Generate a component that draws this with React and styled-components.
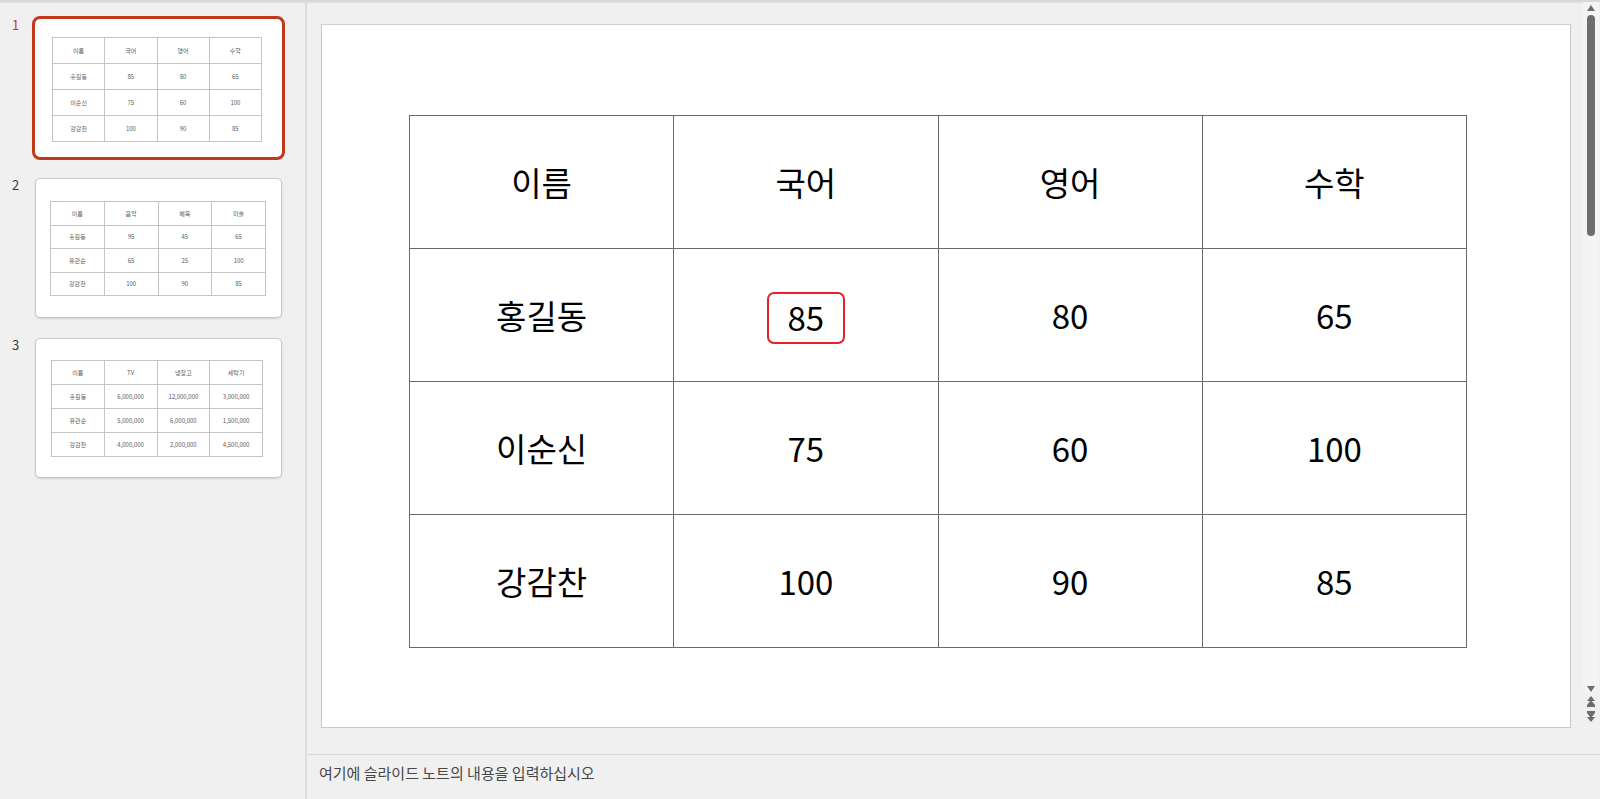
import React from "react";
import styled, { createGlobalStyle } from "styled-components";

const GlobalStyle = createGlobalStyle`
  html, body {
    margin: 0;
    padding: 0;
    background: #f0f0f0;
    overflow: hidden;
  }
  body {
    font-family: "Noto Sans CJK KR", "Noto Sans", sans-serif;
  }
`;

const Window = styled.div`
  width: 1600px;
  height: 799px;
  display: flex;
  flex-direction: column;
  background: #f0f0f0;
  overflow: hidden;
`;

const TopEdge = styled.div`
  height: 2px;
  background: #d8d8d8;
  box-shadow: 0 1px 2px rgba(0, 0, 0, 0.08);
  flex-shrink: 0;
`;

const Body = styled.div`
  flex: 1;
  display: flex;
  min-height: 0;
`;

const SlidePanel = styled.div`
  width: 307px;
  flex-shrink: 0;
  border-right: 2px solid #dcdcdc;
  padding-top: 14px;
  display: flex;
  flex-direction: column;
  gap: 16px;
  box-sizing: border-box;
`;

const SlideRow = styled.div`
  display: flex;
  align-items: flex-start;
`;

const SlideNumber = styled.div`
  width: 32px;
  padding-left: 12px;
  padding-top: 1px;
  box-sizing: border-box;
  font-size: 13px;
  line-height: 16px;
  color: ${(p) => (p.$active ? "#c43e1c" : "#3a3a3a")};
`;

const ThumbSlot = styled.div`
  width: 253px;
  height: 144px;
  display: flex;
`;

const Thumb = styled.div`
  box-sizing: border-box;
  background: #fff;
  margin: ${(p) => (p.$active ? "0" : "2px 3px")};
  width: ${(p) => (p.$active ? "253px" : "247px")};
  height: ${(p) => (p.$active ? "144px" : "140px")};
  border: ${(p) => (p.$active ? "3px solid #c0391b" : "1px solid #c9c9c9")};
  border-radius: ${(p) => (p.$active ? "8px" : "5px")};
  box-shadow: ${(p) => (p.$active ? "none" : "0 1px 2px rgba(0,0,0,0.12)")};
  padding-top: ${(p) => p.$top}px;
  padding-left: ${(p) => p.$left}px;
`;

const MiniTable = styled.table`
  border-collapse: collapse;
  table-layout: fixed;
  width: ${(p) => p.$w}px;
  height: ${(p) => p.$h}px;
`;

const MiniCell = styled.td`
  border: 1px solid #c4c4c4;
  text-align: center;
  vertical-align: middle;
  font-size: 6px;
  line-height: 7px;
  color: #5a5a5a;
  padding: 0;
`;

const Main = styled.div`
  flex: 1;
  display: flex;
  flex-direction: column;
  min-width: 0;
`;

const Workspace = styled.div`
  height: 752px;
  display: flex;
  border-bottom: 1px solid #d9d9d9;
`;

const Stage = styled.div`
  flex: 1;
  padding: 22px 0 0 14px;
`;

const Slide = styled.div`
  width: 1250px;
  height: 704px;
  box-sizing: border-box;
  background: #fff;
  border: 1px solid #c8c8c8;
  border-top-color: #cfcfcf;
  padding: 90px 0 0 87px;
`;

const SlideTable = styled.table`
  border-collapse: collapse;
  table-layout: fixed;
  width: 1058px;
  height: 533px;
`;

const Row = styled.tr`
  height: 133px;
`;

const Cell = styled.td`
  border: 1px solid #6a6a6a;
  text-align: center;
  vertical-align: middle;
  font-size: 33px;
  line-height: 40px;
  color: #000;
  padding: 0;
`;

const EditBox = styled.span`
  display: inline-flex;
  align-items: center;
  justify-content: center;
  width: 78px;
  height: 52px;
  box-sizing: border-box;
  border: 2px solid #e8202a;
  border-radius: 7px;
  margin-top: 6px;
  padding-bottom: 3px;
  vertical-align: middle;
`;

const ScrollBar = styled.div`
  width: 16px;
  margin-right: 1px;
  display: flex;
  flex-direction: column;
  align-items: center;
  background: #f4f4f4;
  border-radius: 0 0 6px 6px;
  height: 690px;
  position: relative;
`;

const ScrollThumb = styled.div`
  width: 8px;
  height: 221px;
  margin-top: 4px;
  border-radius: 4px;
  background: #6d6d6d;
`;

const Arrow = styled.svg`
  display: block;
  flex-shrink: 0;
`;

const ScrollFooter = styled.div`
  position: absolute;
  top: 684px;
  left: 0;
  width: 16px;
  display: flex;
  flex-direction: column;
  align-items: center;
  gap: 4px;
`;

const Notes = styled.div`
  flex: 1;
  padding: 8px 0 0 12px;
  font-size: 15px;
  line-height: 20px;
  color: #474747;
`;

const thumbs = [
  {
    top: 18,
    left: 17,
    w: 210,
    h: 105,
    rows: [
      ["이름", "국어", "영어", "수학"],
      ["홍길동", "85", "80", "65"],
      ["이순신", "75", "60", "100"],
      ["강감찬", "100", "90", "85"],
    ],
  },
  {
    top: 22,
    left: 14,
    w: 216,
    h: 95,
    rows: [
      ["이름", "음악", "체육", "미술"],
      ["홍길동", "95", "45", "65"],
      ["유관순", "65", "25", "100"],
      ["강감찬", "100", "90", "85"],
    ],
  },
  {
    top: 21,
    left: 15,
    w: 212,
    h: 97,
    rows: [
      ["이름", "TV", "냉장고", "세탁기"],
      ["홍길동", "6,000,000", "12,000,000", "3,000,000"],
      ["유관순", "5,000,000", "6,000,000", "1,500,000"],
      ["강감찬", "4,000,000", "2,000,000", "4,500,000"],
    ],
  },
];

const mainRows = thumbs[0].rows;

function UpArrow() {
  return (
    <Arrow width="8" height="6" viewBox="0 0 8 6">
      <path d="M4 0 L8 6 L0 6 Z" fill="#6d6d6d" />
    </Arrow>
  );
}

function DownArrow() {
  return (
    <Arrow width="8" height="6" viewBox="0 0 8 6">
      <path d="M0 0 L8 0 L4 6 Z" fill="#6d6d6d" />
    </Arrow>
  );
}

function DoubleUp() {
  return (
    <Arrow width="8" height="11" viewBox="0 0 8 11">
      <path d="M4 0 L8 5 L0 5 Z M4 4 L8 9 L0 9 Z M0 9 L8 9 L8 11 L0 11 Z" fill="#6d6d6d" />
    </Arrow>
  );
}

function DoubleDown() {
  return (
    <Arrow width="8" height="11" viewBox="0 0 8 11">
      <path d="M0 0 L8 0 L8 2 L0 2 Z M0 2 L8 2 L4 7 Z M0 6 L8 6 L4 11 Z" fill="#6d6d6d" />
    </Arrow>
  );
}

export default function App() {
  return (
    <>
      <GlobalStyle />
      <Window>
        <TopEdge />
        <Body>
          <SlidePanel>
            {thumbs.map((t, i) => (
              <SlideRow key={i}>
                <SlideNumber $active={i === 0}>{i + 1}</SlideNumber>
                <ThumbSlot>
                  <Thumb $active={i === 0} $top={t.top} $left={t.left}>
                    <MiniTable $w={t.w} $h={t.h}>
                      <tbody>
                        {t.rows.map((r, ri) => (
                          <tr key={ri}>
                            {r.map((c, ci) => (
                              <MiniCell key={ci}>{c}</MiniCell>
                            ))}
                          </tr>
                        ))}
                      </tbody>
                    </MiniTable>
                  </Thumb>
                </ThumbSlot>
              </SlideRow>
            ))}
          </SlidePanel>
          <Main>
            <Workspace>
              <Stage>
                <Slide>
                  <SlideTable>
                    <tbody>
                      {mainRows.map((r, ri) => (
                        <Row key={ri}>
                          {r.map((c, ci) => (
                            <Cell key={ci}>
                              {ri === 1 && ci === 1 ? <EditBox>{c}</EditBox> : c}
                            </Cell>
                          ))}
                        </Row>
                      ))}
                    </tbody>
                  </SlideTable>
                </Slide>
              </Stage>
              <ScrollBar>
                <div style={{ height: 3 }} />
                <UpArrow />
                <ScrollThumb />
                <ScrollFooter>
                  <DownArrow />
                  <DoubleUp />
                  <DoubleDown />
                </ScrollFooter>
              </ScrollBar>
            </Workspace>
            <Notes>여기에 슬라이드 노트의 내용을 입력하십시오</Notes>
          </Main>
        </Body>
      </Window>
    </>
  );
}
